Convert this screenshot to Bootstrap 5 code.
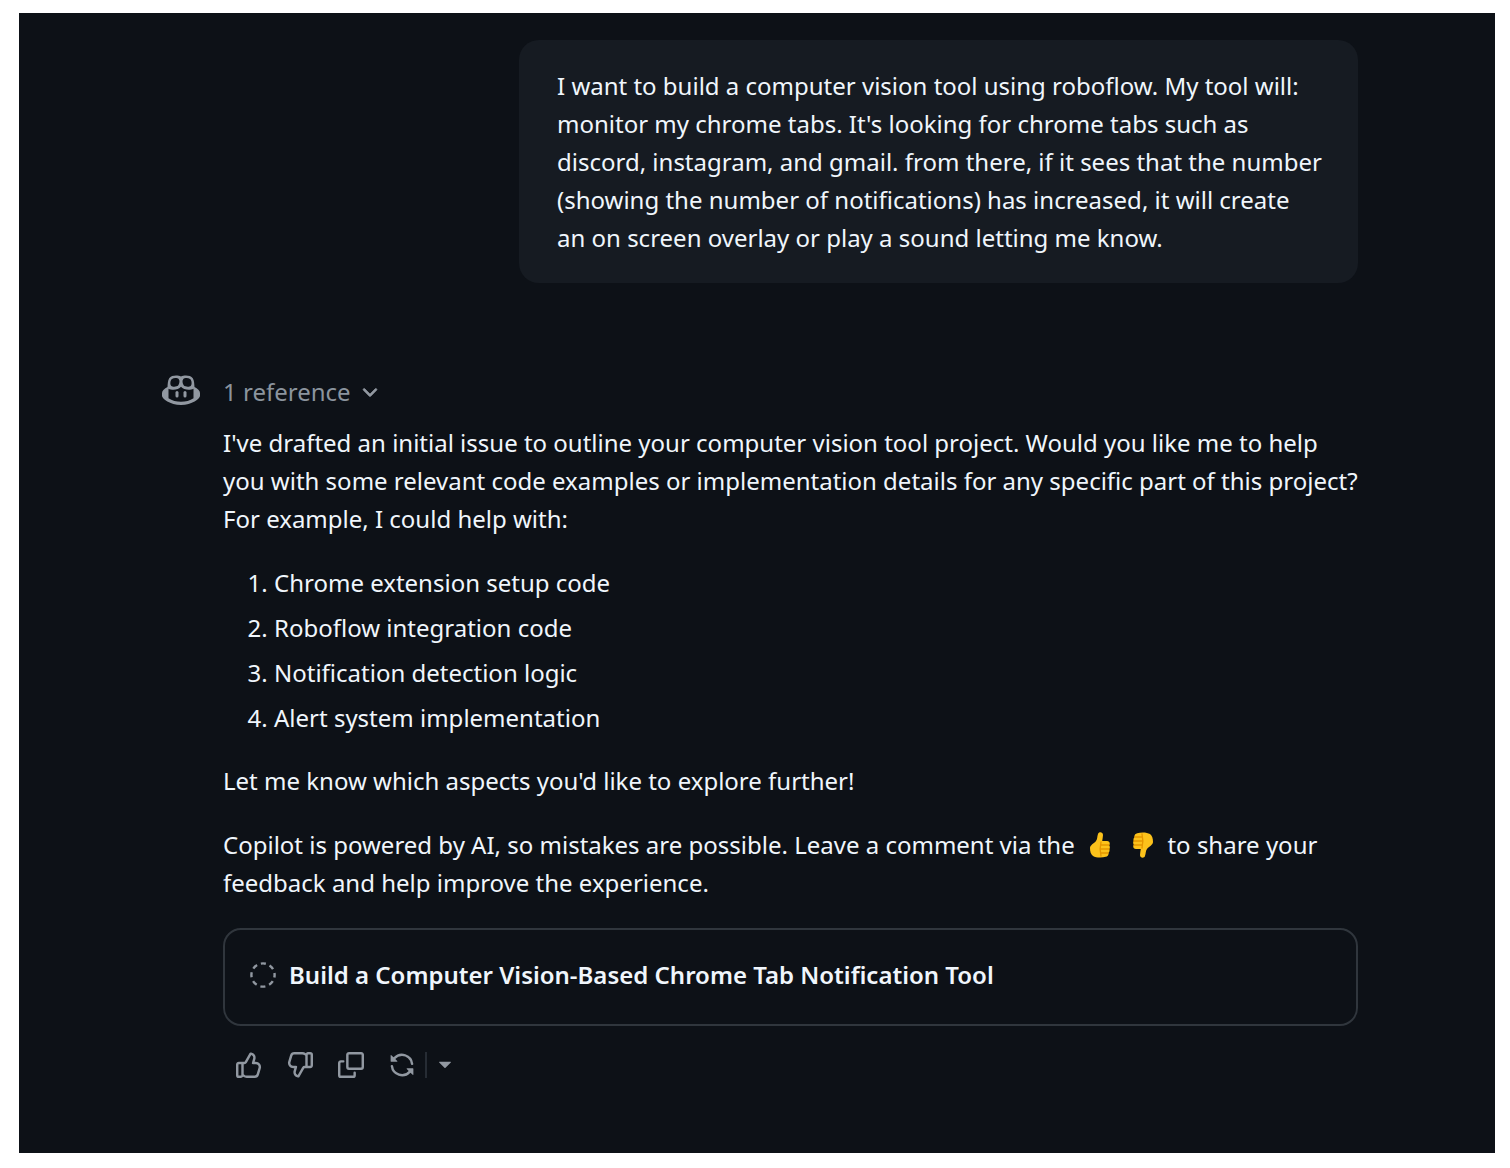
<!DOCTYPE html>
<html lang="en">
<head>
<meta charset="utf-8">
<meta name="viewport" content="width=device-width, initial-scale=1">
<title>Copilot chat</title>
<link href="https://cdn.jsdelivr.net/npm/bootstrap@5.3.0/dist/css/bootstrap.min.css" rel="stylesheet">
<style>
  body { background: #fff; font-family: "Noto Sans", "Open Sans", sans-serif; font-size: 24px; line-height: 38px; color: #f0f6fc; }
  .chat-frame { min-height: 100vh; padding: 13px 15px 15px 19px; }
  .chat-panel { background: #0d1117; padding: 27px 137px 64px 143px; }
  .user-bubble { width: 839px; max-width: 100%; background: #161b22; border-radius: 20px; padding: 27px 26px 26px 38px; margin-bottom: 90px; }
  .avatar-col { width: 61px; padding-top: 2px; }
  .ref-toggle { color: #8b949e; font: inherit; line-height: 38px; margin-bottom: 13px; gap: 8px; }
  .answer p { margin-bottom: 26px; }
  .answer ol { padding-left: 51px; margin-bottom: 25px; }
  .answer li + li { margin-top: 7px; }
  .issue-link { border: 2px solid #30363d; border-radius: 18px; padding: 26px 24px 30px; gap: 12px; color: #f0f6fc; font-weight: 600; }
  .icon-muted { color: #9198a1; fill: currentColor; }
  .act { width: 51px; height: 38px; }
  .act-narrow { width: 36px; }
  .act-bar { margin-top: 20px; }
  .act-split { width: 2px; height: 26px; margin-left: -2px; background: #262c34; }
  .thumb-emoji { width: 22px; height: 26px; margin: 0 7px 0 8px; vertical-align: -4px; }
</style>
<script src="https://cdn.jsdelivr.net/npm/bootstrap@5.3.0/dist/js/bootstrap.bundle.min.js" defer></script>
</head>
<body>
<div class="chat-frame d-flex flex-column">
  <main class="chat-panel flex-grow-1">
    <div class="d-flex justify-content-end">
      <div class="user-bubble">I want to build a computer vision tool using roboflow. My tool will: monitor my chrome tabs. It's looking for chrome tabs such as discord, instagram, and gmail. from there, if it sees that the number (showing the number of notifications) has increased, it will create<br>an on screen overlay or play a sound letting me know.</div>
    </div>
    <div class="d-flex">
      <div class="avatar-col flex-shrink-0 lh-1">
        <svg class="icon-muted" width="38" height="30" viewBox="0 0 38 30" aria-hidden="true"><path fill-rule="evenodd" d="M19 1.6C22 0 28.500 0 30.800 3.200C32.300 5.500 32.300 9 32.500 12C35.500 13.500 38 15.500 38 18V21C38 23.500 30 30 19 30S0 23.500 0 21V18C0 15.500 2.500 13.500 5.500 12C5.700 9 5.700 5.500 7.200 3.200C9.500 0 16 0 19 1.600ZM10 4C8.200 5.200 7.800 9.500 9.300 11C10.700 12.200 15 12 16.300 10.300C17.500 8.500 18 5.500 16.800 4.200C15.500 2.800 11.800 2.800 10 4ZM28 4C26.200 2.800 22.500 2.800 21.200 4.200C20 5.500 20.500 8.500 21.700 10.300C23 12 27.300 12.200 28.700 11C30.200 9.500 29.800 5.200 28 4ZM19 11.800C16.500 15.200 10 15.600 6.500 13.800V23.200C13.500 28 24.500 28 31.500 23.200V13.800C28 15.600 21.500 15.200 19 11.800Z"/><rect x="13.500" y="16" width="3" height="6.500" rx="1.500"/><rect x="21.500" y="16" width="3" height="6.500" rx="1.500"/></svg>
      </div>
      <div class="answer flex-grow-1">
        <button type="button" class="ref-toggle btn p-0 border-0 d-flex align-items-center">1 reference
          <svg class="icon-muted" width="22" height="22" viewBox="0 0 16 16" aria-hidden="true"><path stroke="currentColor" stroke-width=".5" d="M12.780 5.720a.749.749 0 0 1 0 1.060l-4.250 4.250a.749.749 0 0 1-1.060 0L3.220 6.780a.749.749 0 1 1 1.060-1.060L8 9.439l3.720-3.719a.749.749 0 0 1 1.060 0Z"/></svg>
        </button>
        <p>I've drafted an initial issue to outline your computer vision tool project. Would you like me to help you with some relevant code examples or implementation details for any specific part of this project? For example, I could help with:</p>
        <ol>
          <li>Chrome extension setup code</li>
          <li>Roboflow integration code</li>
          <li>Notification detection logic</li>
          <li>Alert system implementation</li>
        </ol>
        <p>Let me know which aspects you'd like to explore further!</p>
        <p>Copilot is powered by AI, so mistakes are possible. Leave a comment via the
          <svg class="thumb-emoji" viewBox="0 0 22 26" role="img" aria-label="thumbs up"><path fill="#fcc21b" d="M1 16c0-3 4-4.500 6-7 1.500-2 1-4 2-7 .6-2.400 5-2.400 5 1 0 2-.6 4-.8 6H18c2.600 0 3.600 2.800 2 4.200 1.200 1.300 1.100 2.800.2 3.800.7 1.300.4 2.900-.7 3.700.4 2.300-.9 3.700-2.700 4.100C13 26 7 26 4 24c-2.200-1.600-3-4.500-3-8Z"/><path fill="none" stroke="#e59600" stroke-width="1.300" stroke-linecap="round" d="M20 13h-8M20 17h-8M19 21h-7M12 10c-1 4-1 10 0 14"/></svg>
          <svg class="thumb-emoji" viewBox="0 0 22 26" role="img" aria-label="thumbs down"><path fill="#fcc21b" transform="rotate(180 11 13)" d="M1 16c0-3 4-4.500 6-7 1.500-2 1-4 2-7 .6-2.400 5-2.400 5 1 0 2-.6 4-.8 6H18c2.600 0 3.600 2.800 2 4.200 1.200 1.300 1.100 2.800.2 3.800.7 1.300.4 2.900-.7 3.700.4 2.300-.9 3.700-2.700 4.100C13 26 7 26 4 24c-2.200-1.600-3-4.500-3-8Z"/><path fill="none" stroke="#e59600" stroke-width="1.300" stroke-linecap="round" d="M2 13h8M2 9h8M3 5h7M10 2c1 4 1 10 0 14"/></svg>
          <span class="text-nowrap">to share your</span> feedback and help improve the experience.</p>
        <a href="#" class="issue-link d-flex align-items-center text-decoration-none">
          <svg class="flex-shrink-0" width="28" height="28" viewBox="0 0 28 28" fill="none" stroke="#9198a1" stroke-width="2.400" aria-hidden="true"><circle cx="14" cy="14" r="11.600" stroke-dasharray="5.100 4.010" stroke-dashoffset="2.550"/></svg>
          Build a Computer Vision-Based Chrome Tab Notification Tool
        </a>
        <div class="act-bar d-flex align-items-center">
          <button type="button" class="act btn p-0 border-0 d-flex align-items-center justify-content-center" aria-label="Good response"><svg class="icon-muted" width="26" height="26" viewBox="0 0 16 16"><path d="M8.347.631A.75.75 0 0 1 9.123.26l.238.04a3.25 3.25 0 0 1 2.591 4.098L11.494 6h.665a3.25 3.25 0 0 1 3.118 4.167l-1.135 3.859A2.751 2.751 0 0 1 11.503 16H6.586a3.75 3.75 0 0 1-2.184-.702A1.75 1.75 0 0 1 3 16H1.75A1.75 1.75 0 0 1 0 14.25v-6.5C0 6.784.784 6 1.75 6h3.417a.25.25 0 0 0 .217-.127ZM4.75 13.649l.396.33c.404.337.914.521 1.44.521h4.917a1.25 1.25 0 0 0 1.2-.897l1.135-3.859A1.75 1.75 0 0 0 12.159 7.5H10.5a.75.75 0 0 1-.721-.956l.731-2.558a1.75 1.75 0 0 0-1.127-2.14L6.69 6.611a1.75 1.75 0 0 1-1.523.889H4.75ZM3.25 7.5h-1.5a.25.25 0 0 0-.25.25v6.5c0 .138.112.25.25.25H3a.25.25 0 0 0 .25-.25Z"/></svg></button>
          <button type="button" class="act btn p-0 border-0 d-flex align-items-center justify-content-center" aria-label="Bad response"><svg class="icon-muted" width="26" height="26" viewBox="0 0 16 16"><path transform="rotate(180 8 8)" d="M8.347.631A.75.75 0 0 1 9.123.26l.238.04a3.25 3.25 0 0 1 2.591 4.098L11.494 6h.665a3.25 3.25 0 0 1 3.118 4.167l-1.135 3.859A2.751 2.751 0 0 1 11.503 16H6.586a3.75 3.75 0 0 1-2.184-.702A1.75 1.75 0 0 1 3 16H1.75A1.75 1.75 0 0 1 0 14.25v-6.5C0 6.784.784 6 1.75 6h3.417a.25.25 0 0 0 .217-.127ZM4.75 13.649l.396.33c.404.337.914.521 1.44.521h4.917a1.25 1.25 0 0 0 1.2-.897l1.135-3.859A1.75 1.75 0 0 0 12.159 7.5H10.5a.75.75 0 0 1-.721-.956l.731-2.558a1.75 1.75 0 0 0-1.127-2.14L6.69 6.611a1.75 1.75 0 0 1-1.523.889H4.75ZM3.25 7.5h-1.5a.25.25 0 0 0-.25.25v6.5c0 .138.112.25.25.25H3a.25.25 0 0 0 .25-.25Z"/></svg></button>
          <button type="button" class="act btn p-0 border-0 d-flex align-items-center justify-content-center" aria-label="Copy"><svg class="icon-muted" width="26" height="26" viewBox="0 0 16 16"><path d="M0 6.75C0 5.784.784 5 1.75 5h1.5a.75.75 0 0 1 0 1.5h-1.5a.25.25 0 0 0-.25.25v7.5c0 .138.112.25.25.25h7.5a.25.25 0 0 0 .25-.25v-1.5a.75.75 0 0 1 1.5 0v1.5A1.75 1.75 0 0 1 9.25 16h-7.5A1.75 1.75 0 0 1 0 14.25Z"/><path d="M5 1.75C5 .784 5.784 0 6.75 0h7.5C15.216 0 16 .784 16 1.75v7.5A1.75 1.75 0 0 1 14.25 11h-7.5A1.75 1.75 0 0 1 5 9.25Zm1.75-.25a.25.25 0 0 0-.25.25v7.5c0 .138.112.25.25.25h7.5a.25.25 0 0 0 .25-.25v-7.5a.25.25 0 0 0-.25-.25Z"/></svg></button>
          <button type="button" class="act btn p-0 border-0 d-flex align-items-center justify-content-center" aria-label="Retry"><svg class="icon-muted" width="26" height="26" viewBox="0 0 16 16"><path d="M1.705 8.005a.75.75 0 0 1 .834.656 5.5 5.5 0 0 0 9.592 2.97l-1.204-1.204a.25.25 0 0 1 .177-.427h3.646a.25.25 0 0 1 .25.25v3.646a.25.25 0 0 1-.427.177l-1.38-1.38A7.002 7.002 0 0 1 1.05 8.84a.75.75 0 0 1 .656-.834ZM8 2.5a5.487 5.487 0 0 0-4.131 1.869l1.204 1.204A.25.25 0 0 1 4.896 6H1.25A.25.25 0 0 1 1 5.75V2.104a.25.25 0 0 1 .427-.177l1.38 1.38A7.002 7.002 0 0 1 14.95 7.16a.75.75 0 0 1-1.49.178A5.5 5.5 0 0 0 8 2.5Z"/></svg></button>
          <span class="act-split"></span>
          <button type="button" class="act act-narrow btn p-0 border-0 d-flex align-items-center justify-content-center" aria-label="Retry options"><svg class="icon-muted" width="26" height="26" viewBox="0 0 16 16"><path d="m4.427 6.427 3.396 3.396a.25.25 0 0 0 .354 0l3.396-3.396A.25.25 0 0 0 11.396 6H4.604a.25.25 0 0 0-.177.427Z"/></svg></button>
        </div>
      </div>
    </div>
  </main>
</div>
</body>
</html>
